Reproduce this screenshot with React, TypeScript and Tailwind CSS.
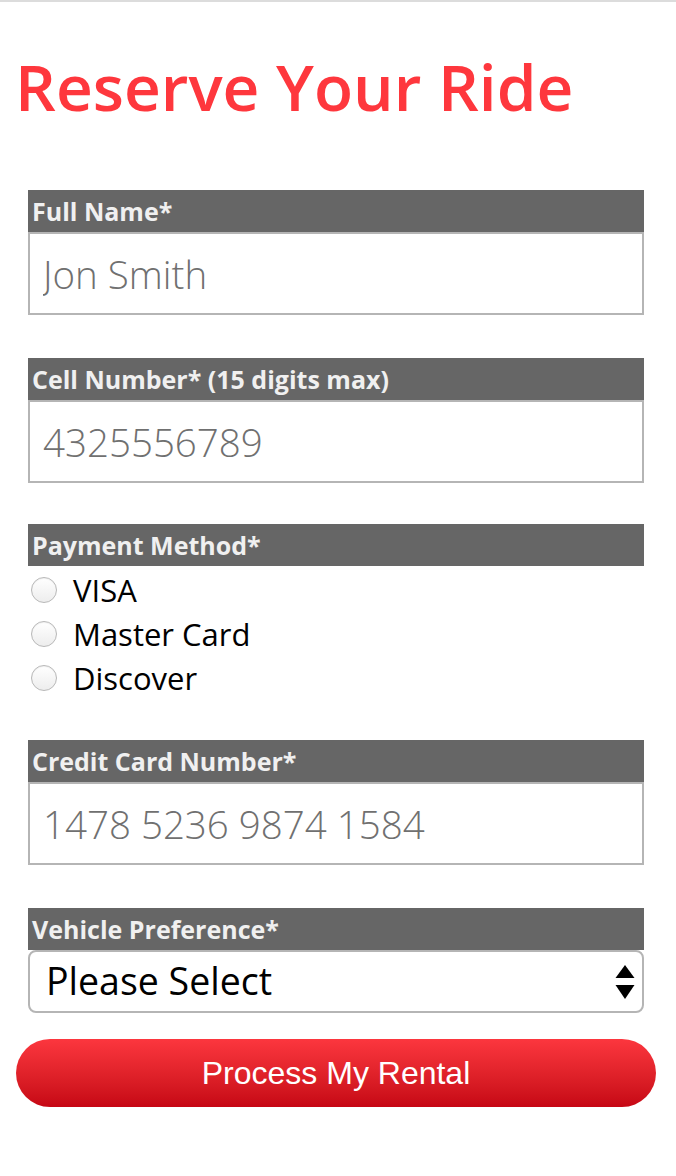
import React from "react";

function Label({ children }: { children: React.ReactNode }) {
  return (
    <div className="h-[42px] bg-[#666666] pl-[4px] text-[25px] font-bold leading-[42px] text-[#f0f0f0] whitespace-nowrap">
      {children}
    </div>
  );
}

function TextField({ placeholder }: { placeholder: string }) {
  return (
    <input
      type="text"
      placeholder={placeholder}
      className="block h-[83px] w-full border-2 border-[#b5b5b5] bg-white pl-[13px] text-[38.5px] font-light text-black outline-none placeholder:text-[#707070]"
      style={{ fontFamily: '"Open Sans", sans-serif' }}
    />
  );
}

function Radio({ label }: { label: string }) {
  return (
    <label className="flex h-[44px] items-center">
      <span className="ml-[3px] flex h-[26px] w-[26px] items-center justify-center rounded-full border border-[#b8b8b8] bg-gradient-to-b from-[#ffffff] to-[#ededed] shadow-[inset_0_1px_1px_rgba(0,0,0,0.06)]">
        <input type="radio" name="pay" className="h-0 w-0 appearance-none" />
      </span>
      <span className="ml-[16px] text-[31px] leading-none text-black">{label}</span>
    </label>
  );
}

export default function App() {
  return (
    <div
      className="min-h-screen border-t-2 border-[#dcdcdc] bg-white"
      style={{ fontFamily: '"Open Sans", sans-serif' }}
    >
      <h1 className="mt-[53px] pl-[15px] text-[64px] font-semibold leading-[64px] text-[#fe373d]">
        Reserve Your Ride
      </h1>
      <form className="ml-[16px] mr-[20px] mt-[71px]" onSubmit={(e) => e.preventDefault()}>
        <div className="mx-[12px]">
          <Label>Full Name*</Label>
          <TextField placeholder="Jon Smith" />

          <div className="mt-[43px]">
            <Label>Cell Number* (15 digits max)</Label>
            <TextField placeholder="4325556789" />
          </div>

          <div className="mt-[41px]">
            <Label>Payment Method*</Label>
            <div className="pt-[2px]">
              <Radio label="VISA" />
              <Radio label="Master Card" />
              <Radio label="Discover" />
            </div>
          </div>

          <div className="mt-[40px]">
            <Label>Credit Card Number*</Label>
            <TextField placeholder="1478 5236 9874 1584" />
          </div>

          <div className="mt-[43px]">
            <Label>Vehicle Preference*</Label>
            <div className="relative">
              <select
                className="block h-[63px] w-full appearance-none rounded-[8px] border-2 border-[#b5b5b5] bg-white pl-[16px] text-[37.5px] text-black outline-none"
                style={{ fontFamily: '"Open Sans", sans-serif' }}
                defaultValue=""
              >
                <option value="">Please Select</option>
                <option value="compact">Compact</option>
                <option value="sedan">Sedan</option>
                <option value="suv">SUV</option>
              </select>
              <svg
                className="pointer-events-none absolute right-[9px] top-[15px]"
                width="20"
                height="35"
                viewBox="0 0 20 35"
              >
                <polygon points="10,0 19.5,13 0.5,13" fill="#000" />
                <polygon points="0.5,20 19.5,20 10,34" fill="#000" />
              </svg>
            </div>
          </div>
        </div>

        <button
          type="submit"
          className="mt-[26px] block h-[68px] w-full rounded-full bg-gradient-to-b from-[#fc363e] to-[#c60614] text-[32px] text-white"
          style={{ fontFamily: '"Liberation Sans", Arial, sans-serif' }}
        >
          Process My Rental
        </button>
      </form>
    </div>
  );
}
